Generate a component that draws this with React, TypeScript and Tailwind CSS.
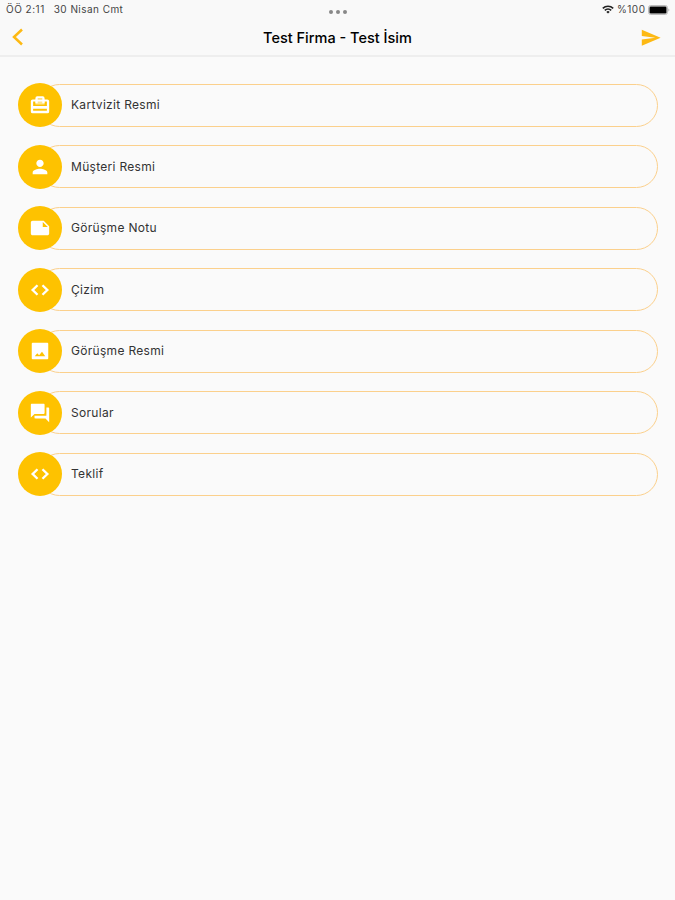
import type { ComponentType } from 'react';
import { MdNote, MdPerson, MdQuestionAnswer, MdSend } from 'react-icons/md';

interface IconProps {
  className?: string;
}

interface MenuItem {
  label: string;
  icon: ComponentType<IconProps>;
}

const ITEMS: MenuItem[] = [
  { label: 'Kartvizit Resmi', icon: CardIcon },
  { label: 'Müşteri Resmi', icon: MdPerson },
  { label: 'Görüşme Notu', icon: MdNote },
  { label: 'Çizim', icon: CodeIcon },
  { label: 'Görüşme Resmi', icon: PhotoIcon },
  { label: 'Sorular', icon: MdQuestionAnswer },
  { label: 'Teklif', icon: CodeIcon },
];

export default function App() {
  return (
    <div className="min-h-screen bg-[#fafafa] font-['Inter','Liberation_Sans',sans-serif] text-black">
      <header className="h-[57px] border-b-2 border-[#eeeeee] bg-[#f9f9f9]">
        <StatusBar />
        <NavBar title="Test Firma - Test İsim" />
      </header>
      <main className="flex flex-col gap-[17.5px] pt-[26px] pr-[17px] pl-[18px]">
        {ITEMS.map((item) => (
          <MenuRow key={item.label} item={item} />
        ))}
      </main>
    </div>
  );
}

function StatusBar() {
  return (
    <div className="grid h-[19px] grid-cols-3 items-center pr-[5px] pl-1.5 text-[10px] text-[#444]">
      <div className="flex gap-[9px] whitespace-nowrap">
        <span className="tracking-[0.5px]">ÖÖ 2:11</span>
        <span className="tracking-[0.45px]">30 Nisan Cmt</span>
      </div>
      <div className="flex justify-center gap-[3px] pt-1">
        <span className="size-1 rounded-full bg-[#888]" />
        <span className="size-1 rounded-full bg-[#888]" />
        <span className="size-1 rounded-full bg-[#888]" />
      </div>
      <div className="flex items-center justify-end gap-[2.500px]">
        <WifiIcon />
        <span className="tracking-[0.5px]">%100</span>
        <BatteryIcon />
      </div>
    </div>
  );
}

function NavBar({ title }: { title: string }) {
  return (
    <div className="grid h-[37px] grid-cols-[60px_1fr_60px] items-center">
      <button className="pb-[2px] pl-3" aria-label="Geri">
        <svg width="12" height="18" viewBox="0 0 12 18" fill="none" stroke="#fdb913" strokeWidth="2.500">
          <path d="M10 1.500 2 9l8 7.500" />
        </svg>
      </button>
      <h1 className="text-center text-[14.5px] font-medium">{title}</h1>
      <button className="flex justify-end pr-[14px]" aria-label="Gönder">
        <MdSend className="size-[21.5px] text-[#fdb913]" />
      </button>
    </div>
  );
}

function MenuRow({ item }: { item: MenuItem }) {
  const Icon = item.icon;
  return (
    <div className="flex h-11 items-center">
      <span className="z-10 flex size-11 shrink-0 items-center justify-center rounded-full bg-[#fec200]">
        <Icon className="size-[22px] text-white" />
      </span>
      {/* outline starts underneath the round badge */}
      <div className="-ml-[24px] flex h-[43px] flex-1 items-center rounded-full border border-[#fbd08c] pl-[32px] text-[12px] tracking-[0.3px] text-[#333]">
        {item.label}
      </div>
    </div>
  );
}

function CardIcon({ className }: IconProps) {
  return (
    <svg className={className} viewBox="0 0 24 24" fill="currentColor">
      <path
        fillRule="evenodd"
        d="M7 6V4.500Q7 2.500 9 2.500h6q2 0 2 2V6h3q2 0 2 2v11q0 2-2 2H4q-2 0-2-2V8q0-2 2-2zM9.500 4.800V6h5V4.800zM4.500 8.300v4.900h15V8.300H17V10h-2.500V8.300h-5V10H7V8.300zM4.500 16v2.300h15V16z"
      />
      <path d="M7 6h10v5.500H7z" opacity=".55" />
    </svg>
  );
}

function CodeIcon({ className }: IconProps) {
  return (
    <svg className={className} viewBox="0 0 24 24" fill="none" stroke="currentColor" strokeWidth="2.600">
      <path d="M9.300 6.800 4 12l5.300 5.200M14.700 6.800 20 12l-5.300 5.200" />
    </svg>
  );
}

function PhotoIcon({ className }: IconProps) {
  return (
    <svg className={className} viewBox="0 0 24 24" fill="currentColor">
      <path
        fillRule="evenodd"
        d="M4 3h16q1 0 1 1v16q0 1-1 1H4q-1 0-1-1V4q0-1 1-1zM6.300 17.800h11.400l-3.500-5-3.200 3.700-2-2z"
      />
    </svg>
  );
}

function WifiIcon() {
  return (
    <svg width="12" height="9" viewBox="0 0 12 9" fill="none" stroke="#222" strokeWidth="1.600">
      <path d="M.8 3.300a7.500 7.500 0 0 1 10.400 0" />
      <path d="M2.800 5.400a4.600 4.600 0 0 1 6.400 0" />
      <path d="M6 8.600 4.300 6.900a2.500 2.500 0 0 1 3.400 0z" fill="#222" stroke="none" />
    </svg>
  );
}

function BatteryIcon() {
  return (
    <svg width="22" height="10" viewBox="0 0 22 10">
      <rect x=".5" y=".5" width="19" height="9" rx="2.200" fill="none" stroke="#bbb" />
      <rect x="1.500" y="1.500" width="17" height="7" rx="1.200" fill="#000" />
      <path d="M20.500 3.500c1 .3 1 2.700 0 3z" fill="#999" />
    </svg>
  );
}
